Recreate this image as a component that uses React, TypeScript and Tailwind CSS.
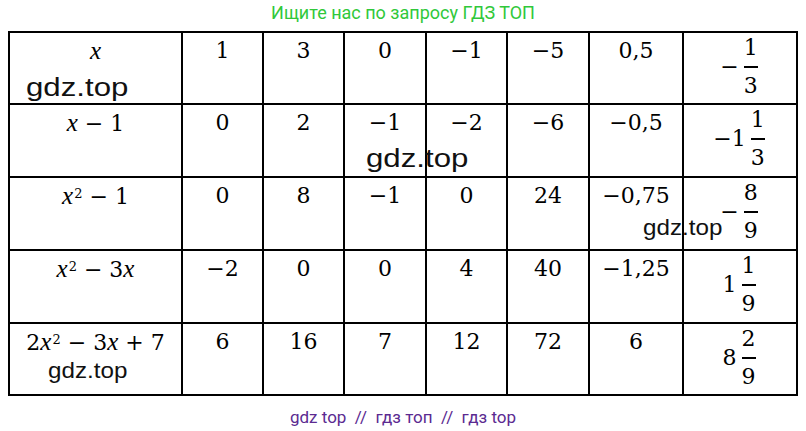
import React from "react";

const serif = "font-['DejaVu_Serif',serif]";

function X() {
  return <span className="italic font-['Liberation_Serif',serif] text-[25px]">x</span>;
}

function Sq() {
  return <sup className="text-[13px] ml-[1px]">2</sup>;
}

function Op({ c }: { c: string }) {
  return <span className="mx-[7px]">{c}</span>;
}

function Frac({ lead, num, den }: { lead?: string; num: string; den: string }) {
  return (
    <div className="flex justify-center pt-[4px]">
      <div className="inline-flex items-center gap-[3px]">
        {lead && <span className="leading-[22px]">{lead}</span>}
        <div className="flex flex-col items-center px-[2px]">
          <span className="leading-[22px]">{num}</span>
          <span className="h-[2px] self-stretch bg-black my-[7px]" />
          <span className="leading-[22px]">{den}</span>
        </div>
      </div>
    </div>
  );
}

type Row = { expr: React.ReactNode; vals: string[]; frac: React.ReactNode };

const rows: Row[] = [
  {
    expr: <X />,
    vals: ["1", "3", "0", "−1", "−5", "0,5"],
    frac: <Frac lead="−" num="1" den="3" />,
  },
  {
    expr: (
      <>
        <X />
        <Op c="−" />1
      </>
    ),
    vals: ["0", "2", "−1", "−2", "−6", "−0,5"],
    frac: <Frac lead="−1" num="1" den="3" />,
  },
  {
    expr: (
      <>
        <X />
        <Sq />
        <Op c="−" />1
      </>
    ),
    vals: ["0", "8", "−1", "0", "24", "−0,75"],
    frac: <Frac lead="−" num="8" den="9" />,
  },
  {
    expr: (
      <>
        <X />
        <Sq />
        <Op c="−" />3<X />
      </>
    ),
    vals: ["−2", "0", "0", "4", "40", "−1,25"],
    frac: <Frac lead="1" num="1" den="9" />,
  },
  {
    expr: (
      <>
        2<X />
        <Sq />
        <Op c="−" />3<X />
        <Op c="+" />7
      </>
    ),
    vals: ["6", "16", "7", "12", "72", "6"],
    frac: <Frac lead="8" num="2" den="9" />,
  },
];

// водяные знаки поверх таблицы
const marks = [
  { cls: "left-[26px] top-[74px] text-[26px] leading-[26px] scale-x-[1.2]" },
  { cls: "left-[366px] top-[145px] text-[26px] leading-[26px] scale-x-[1.2]" },
  { cls: "left-[643px] top-[217px] text-[22px] leading-[22px] scale-x-[1.1]" },
  { cls: "left-[48px] top-[360px] text-[22px] leading-[22px] scale-x-[1.1]" },
];

export default function App() {
  return (
    <div className="relative w-[806px] h-[431px] bg-white overflow-hidden">
      <div className="h-[31px] pt-[2px] text-center font-['Roboto',sans-serif] text-[18px] leading-[21px] text-[#30c83a]">
        Ищите нас по запросу ГДЗ ТОП
      </div>

      <div
        className={`ml-[8px] w-[790px] grid grid-cols-[171px_79px_79px_80px_79px_80px_92px_112px] grid-rows-[70px_71px_71px_71px_70px] gap-[2px] bg-black p-[2px] text-[22px] text-black ${serif}`}
      >
        {rows.map((r, i) => (
          <React.Fragment key={i}>
            <div className="bg-white pt-[4px] text-center leading-[28px] whitespace-nowrap">
              {r.expr}
            </div>
            {r.vals.map((v, j) => (
              <div key={j} className="bg-white pt-[4px] text-center leading-[28px]">
                {v}
              </div>
            ))}
            <div className="bg-white">{r.frac}</div>
          </React.Fragment>
        ))}
      </div>

      <div className="h-[35px] pt-[11px] text-center font-['Roboto',sans-serif] text-[17px] leading-[20px] text-[#5b2a91] whitespace-pre">
        {"gdz top  //  гдз топ  //  гдз top"}
      </div>

      {marks.map((m, i) => (
        <span
          key={i}
          className={`absolute origin-left font-['Liberation_Sans',sans-serif] text-[#111] ${m.cls}`}
        >
          gdz.top
        </span>
      ))}
    </div>
  );
}
